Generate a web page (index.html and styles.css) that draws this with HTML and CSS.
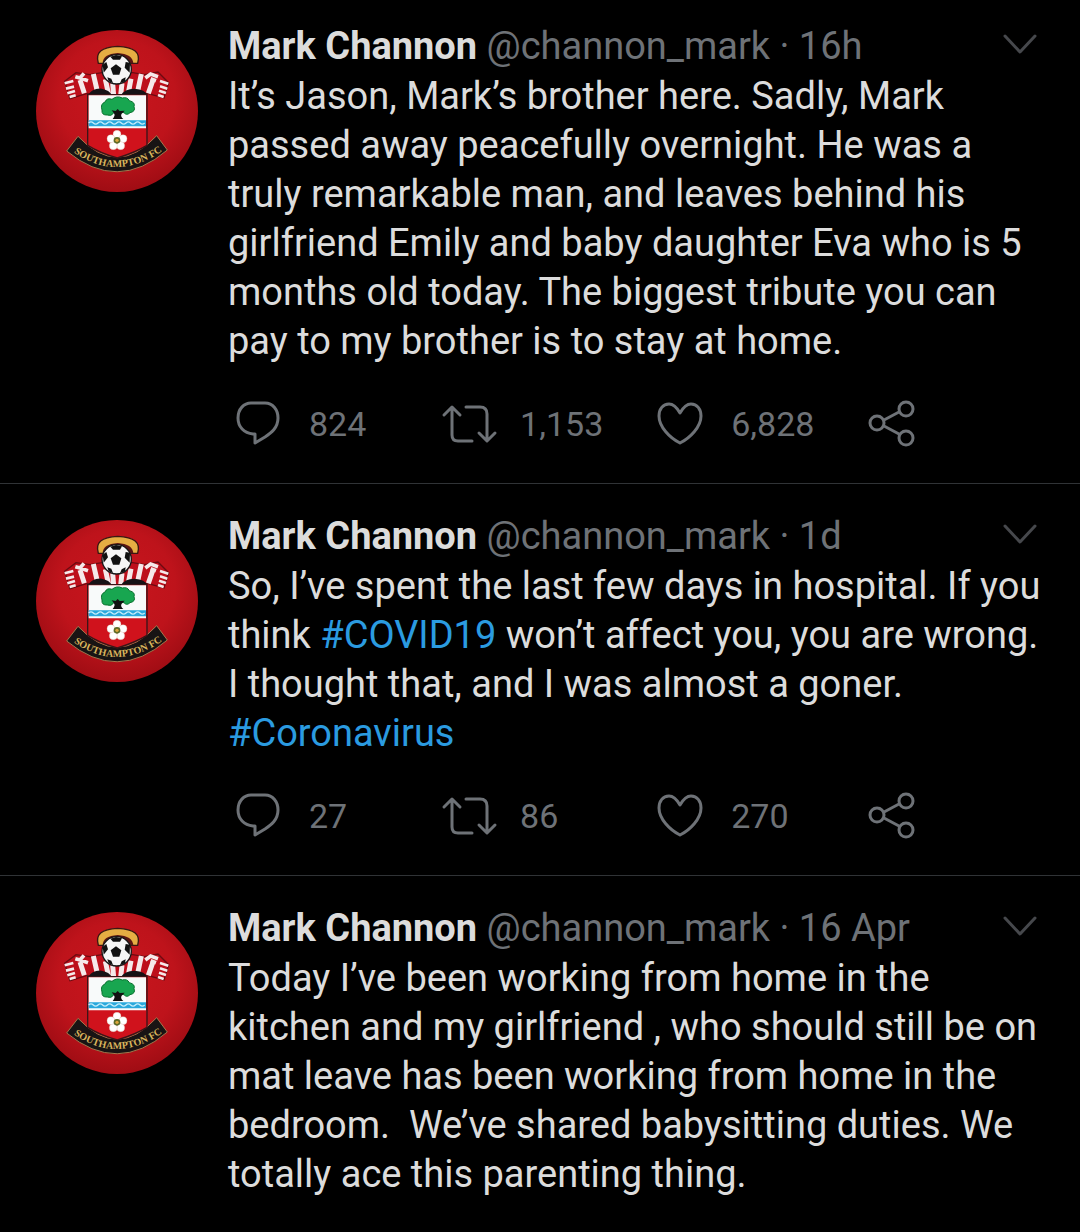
FILE: index.html
```html
<!DOCTYPE html>
<html lang="en">
<head>
  <meta charset="UTF-8">
  <meta name="viewport" content="width=device-width, initial-scale=1.0">
  <title>Mark Channon (@channon_mark)</title>
  <link rel="stylesheet" href="styles.css">
</head>
<body>
  <!-- shared icons -->
  <svg class="sprite" aria-hidden="true">
    <defs>
      <radialGradient id="red" cx="50%" cy="42%" r="60%">
        <stop offset="0" stop-color="#c9161e"/>
        <stop offset="0.6" stop-color="#be131b"/>
        <stop offset="1" stop-color="#9c0c13"/>
      </radialGradient>
      <path id="banner" d="M134 399 Q262 485 394 395"/>
    </defs>
    <symbol id="crest" viewBox="18 30 486 486">
      <circle cx="261" cy="273" r="243" fill="url(#red)"/>
      <!-- halo -->
      <path d="M205 130 Q190 82 263 79 Q338 82 323 130 Z" fill="#e5ad43" stroke="#3a1712" stroke-width="4"/>
      <path d="M218 130 Q218 102 263 99 Q308 102 310 130 Z" fill="#5b1612"/>
      <!-- scarf -->
      <path d="M104 184 L138 158 L180 164 L216 158 H308 L344 164 L384 156 L416 188 L402 234 L352 220 L315 226 H210 L172 220 L120 236 Z" fill="#bd0f1b" stroke="#6d0a11" stroke-width="4"/>
      <path d="M150 180 L163 220M190 162 L202 214M226 178 L236 224M248 190 L251 226M276 190 L272 226M303 176 L294 224M334 162 L323 214M369 180 L355 220" fill="none" stroke="#f5e9ea" stroke-width="15"/>
      <path d="M104 190 L130 183M108 206 L132 200M112 220 L135 213M119 231 L137 226M390 183 L415 191M390 199 L412 206M387 212 L408 219M384 225 L401 231" fill="none" stroke="#f5e9ea" stroke-width="8"/>
      <path d="M136 170 L150 174 L162 160M150 174 L174 182M346 174 L362 162 L384 170M362 176 L378 182" fill="none" stroke="#f5e9ea" stroke-width="11"/>
      <path d="M174 226 Q186 204 215 206 Q238 210 246 226 ZM274 226 Q282 206 314 206 Q346 208 352 226 Z" fill="#171216"/>
      <!-- ball -->
      <circle cx="260" cy="148" r="44" fill="#f6f6f6" stroke="#171717" stroke-width="4"/>
      <path d="M258 133 L274 145 L268 164 L249 164 L242 145 ZM241 110 L258 105 L276 109 L270 119 L249 119 ZM218 134 L229 126 L234 142 L221 158 ZM300 128 L287 126 L284 143 L299 158 ZM232 172 L244 176 L249 189 L236 184 ZM287 172 L275 178 L270 190 L285 184 Z" fill="#111"/>
      <!-- name ribbon -->
      <path d="M144 349 Q262 475 380 347 L412 390 Q262 519 110 393 Z" fill="#181414" stroke="#a5774c" stroke-width="3"/>
      <!-- shield -->
      <path d="M173 224 H351 V376 Q318 396 262 414 Q208 398 173 376 Z" fill="#d0121c" stroke="#3a1518" stroke-width="4"/>
      <path d="M176 226 H348 V325 H176 Z" fill="#f8fafa"/>
      <path d="M176 301 H348 V319 H176 Z" fill="#29a8dc"/>
      <path d="M176 309 q7 -7 14 0 t14 0 t14 0 t14 0 t14 0 t14 0 t14 0 t14 0 t14 0 t14 0 t14 0 t14 0" fill="none" stroke="#c6edfa" stroke-width="4"/>
      <!-- tree -->
      <path d="M216 270 Q210 252 225 246 Q231 232 246 238 Q260 226 277 234 Q292 230 298 242 Q317 247 312 260 Q318 274 300 278 Q290 288 282 278 Q266 274 251 279 Q244 290 232 285 Q214 286 216 270 Z" fill="#18a650" stroke="#08712e" stroke-width="3"/>
      <path d="M248 297 Q257 287 252 280 L245 271 L257 273 L263 267 L269 273 L284 272 L275 281 Q270 288 280 297 Z" fill="#111"/>
      <!-- rose -->
      <g fill="#fff" stroke="#d9b4a5" stroke-width="1">
        <circle cx="261" cy="343" r="12"/>
        <circle cx="279" cy="356" r="12"/>
        <circle cx="272" cy="377" r="12"/>
        <circle cx="250" cy="377" r="12"/>
        <circle cx="243" cy="356" r="12"/>
      </g>
      <circle cx="261" cy="361" r="10" fill="#5d6b28"/>
      <circle cx="261" cy="361" r="5" fill="#dca63d"/>
    </symbol>
    <symbol id="reply" viewBox="0 0 60 48">
      <path d="M23 3 H37 C45 3 50 10 50 18 C50 28 43 33 37 37 L27 43 V34 H25 C16 33 10 27 10 18 C10 9 16 3 23 3 Z"/>
    </symbol>
    <symbol id="retweet" viewBox="0 0 60 48">
      <path d="M5 15 L13 7 L21 15M13 8 V35 Q13 41 19 41 H33M27 7 H41 Q48 7 48 14 V40M40 33 L48 41 L56 33"/>
    </symbol>
    <symbol id="like" viewBox="0 0 60 48">
      <path d="M30 13 C26 6 22 4 19 4 C13 4 9 9 9 16 C9 27 20 38 30 43 C40 38 51 27 51 16 C51 9 47 4 41 4 C38 4 34 6 30 13 Z"/>
    </symbol>
    <symbol id="share" viewBox="0 0 60 48">
      <circle cx="16" cy="23" r="7"/><circle cx="45" cy="9" r="7"/><circle cx="45" cy="38" r="7"/>
      <path d="M23 20 L38 12M23 26 L38 34"/>
    </symbol>
    <symbol id="chevron" viewBox="0 0 36 22">
      <path d="M3 3 L18 19 L33 3"/>
    </symbol>
  </svg>

  <main class="timeline">
    <article class="tweet">
      <svg class="avatar" viewBox="18 30 486 486" role="img" aria-label="Southampton FC">
        <use href="#crest" x="18" y="30" width="486" height="486"/>
        <text class="crest-name"><textPath href="#banner" startOffset="50%" text-anchor="middle">SOUTHAMPTON FC</textPath></text>
      </svg>
      <div class="content">
        <header class="tweet-header">
          <div class="byline"><strong class="name">Mark Channon</strong> <span class="meta">@channon_mark · 16h</span></div>
          <button class="more" aria-label="More"><svg><use href="#chevron"/></svg></button>
        </header>
        <p class="text">It’s Jason, Mark’s brother here. Sadly, Mark passed away peacefully overnight. He was a truly remarkable man, and leaves behind his girlfriend Emily and baby daughter Eva who is 5 months old today. The biggest tribute you can pay to my brother is to stay at home.</p>
        <div class="actions">
          <button class="action" aria-label="Reply"><svg><use href="#reply"/></svg><span>824</span></button>
          <button class="action" aria-label="Retweet"><svg><use href="#retweet"/></svg><span>1,153</span></button>
          <button class="action" aria-label="Like"><svg><use href="#like"/></svg><span>6,828</span></button>
          <button class="action" aria-label="Share"><svg><use href="#share"/></svg></button>
        </div>
      </div>
    </article>

    <article class="tweet">
      <svg class="avatar" viewBox="18 30 486 486" role="img" aria-label="Southampton FC">
        <use href="#crest" x="18" y="30" width="486" height="486"/>
        <text class="crest-name"><textPath href="#banner" startOffset="50%" text-anchor="middle">SOUTHAMPTON FC</textPath></text>
      </svg>
      <div class="content">
        <header class="tweet-header">
          <div class="byline"><strong class="name">Mark Channon</strong> <span class="meta">@channon_mark · 1d</span></div>
          <button class="more" aria-label="More"><svg><use href="#chevron"/></svg></button>
        </header>
        <p class="text">So, I’ve spent the last few days in hospital. If you think <a href="#">#COVID19</a> won’t affect you, you are wrong. I thought that, and I was almost a goner. <a href="#">#Coronavirus</a></p>
        <div class="actions">
          <button class="action" aria-label="Reply"><svg><use href="#reply"/></svg><span>27</span></button>
          <button class="action" aria-label="Retweet"><svg><use href="#retweet"/></svg><span>86</span></button>
          <button class="action" aria-label="Like"><svg><use href="#like"/></svg><span>270</span></button>
          <button class="action" aria-label="Share"><svg><use href="#share"/></svg></button>
        </div>
      </div>
    </article>

    <article class="tweet">
      <svg class="avatar" viewBox="18 30 486 486" role="img" aria-label="Southampton FC">
        <use href="#crest" x="18" y="30" width="486" height="486"/>
        <text class="crest-name"><textPath href="#banner" startOffset="50%" text-anchor="middle">SOUTHAMPTON FC</textPath></text>
      </svg>
      <div class="content">
        <header class="tweet-header">
          <div class="byline"><strong class="name">Mark Channon</strong> <span class="meta">@channon_mark · 16 Apr</span></div>
          <button class="more" aria-label="More"><svg><use href="#chevron"/></svg></button>
        </header>
        <p class="text">Today I’ve been working from home in the kitchen and my girlfriend , who should still be on mat leave has been working from home in the bedroom.&nbsp; We’ve shared babysitting duties. We totally ace this parenting thing.</p>
      </div>
    </article>
  </main>
</body>
</html>
```
FILE: styles.css
```css
body {
  margin: 0;
  background: #000;
  color: #dcdcdc;
  font-family: Roboto, "Liberation Sans", sans-serif;
  font-size: 38px;
  line-height: 49px;
}
.sprite {
  position: absolute;
  width: 0;
  height: 0;
}
.tweet {
  display: flex;
  gap: 30px;
  padding: 28px 28px 35px 36px;
  border-bottom: 1px solid #303336;
}
.tweet:first-child {
  padding-top: 22px;
}
.tweet:last-child {
  border-bottom: none;
  padding-bottom: 32px;
}
.avatar {
  flex: none;
  width: 162px;
  height: 162px;
  margin-top: 8px;
}
.crest-name {
  font-family: "Liberation Serif", serif;
  font-size: 30px;
  font-weight: bold;
  fill: #d8b45c;
}
.content {
  flex: 1;
  min-width: 0;
}
.tweet-header {
  display: flex;
  justify-content: space-between;
  align-items: flex-start;
  margin-right: 14px;
}
.name {
  font-weight: 700;
}
.meta {
  color: #6e7277;
}
.text {
  margin: 1px 0 0;
}
.text a {
  color: #2b9be0;
  text-decoration: none;
}
button {
  padding: 0;
  border: none;
  background: none;
  color: #6e7277;
  font: inherit;
  cursor: pointer;
}
button svg {
  display: block;
  fill: none;
  stroke: currentColor;
  stroke-width: 3px;
  stroke-linecap: round;
  stroke-linejoin: round;
}
.more {
  padding-top: 11px;
  color: #46484c;
}
.more svg {
  width: 36px;
  height: 22px;
}
.actions {
  display: grid;
  grid-template-columns: repeat(3, 26%) 60px;
  margin: 34px 12px 0 0;
}
.action {
  display: flex;
  align-items: center;
  gap: 21px;
  height: 48px;
  font-size: 34px;
}
.action svg {
  flex: none;
  width: 60px;
  height: 48px;
}
```
